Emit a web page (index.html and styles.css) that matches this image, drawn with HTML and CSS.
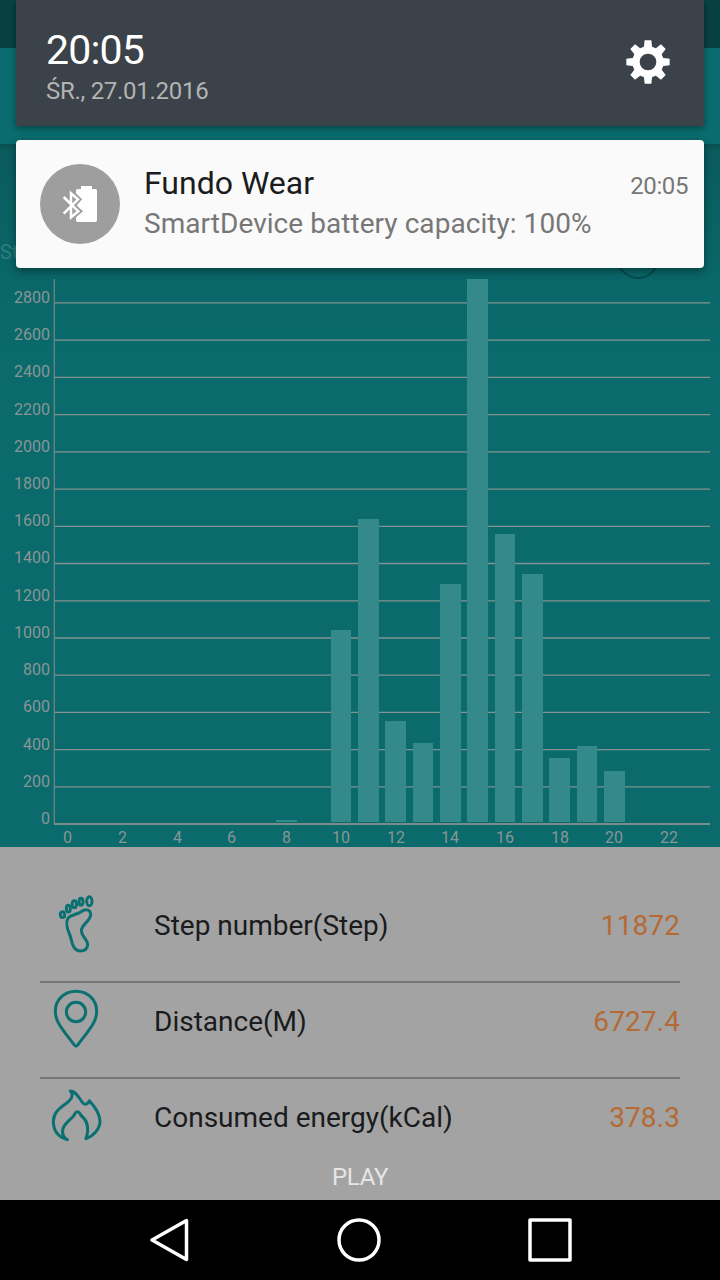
FILE: index.html
```
<!DOCTYPE html>
<html lang="pl">
<head>
<meta charset="utf-8">
<title>Fundo Wear</title>
<link rel="stylesheet" href="styles.css">
</head>
<body>
<div class="app">
<div class="status-bar"></div>
<div class="toolbar"></div>

<div class="chart-panel">
<span class="chart-title">Step</span>
<svg class="chart" width="720" height="703" viewBox="0 144 720 703">
    <circle class="ring" cx="638" cy="258" r="20"/>
    <path class="grid" d="M54 302.9H710M54 340.2H710M54 377.4H710M54 414.6H710M54 451.9H710M54 489.1H710M54 526.3H710M54 563.5H710M54 600.8H710M54 638H710M54 675.2H710M54 712.4H710M54 749.7H710M54 786.9H710"/>
    <path class="axis" d="M54.3 279V824"/>
    <path class="axis base" d="M54 824H710"/>
    <g class="bars">
        <rect x="276" y="820" width="21" height="2"/>
        <rect x="331" y="630" width="20" height="192"/>
        <rect x="358" y="519" width="21" height="303"/>
        <rect x="385" y="721" width="21" height="101"/>
        <rect x="413" y="743" width="20" height="79"/>
        <rect x="440" y="584" width="21" height="238"/>
        <rect x="467" y="279" width="21" height="543"/>
        <rect x="495" y="534" width="20" height="288"/>
        <rect x="522" y="574" width="21" height="248"/>
        <rect x="549" y="758" width="21" height="64"/>
        <rect x="577" y="746" width="20" height="76"/>
        <rect x="604" y="771" width="21" height="51"/>
    </g>
    <g class="y-labels">
        <text x="50" y="303">2800</text>
        <text x="50" y="340">2600</text>
        <text x="50" y="377">2400</text>
        <text x="50" y="415">2200</text>
        <text x="50" y="452">2000</text>
        <text x="50" y="489">1800</text>
        <text x="50" y="526">1600</text>
        <text x="50" y="563">1400</text>
        <text x="50" y="601">1200</text>
        <text x="50" y="638">1000</text>
        <text x="50" y="675">800</text>
        <text x="50" y="712">600</text>
        <text x="50" y="750">400</text>
        <text x="50" y="787">200</text>
        <text x="50" y="824">0</text>
    </g>
    <g class="x-labels">
        <text x="67.5" y="843">0</text>
        <text x="122.5" y="843">2</text>
        <text x="177.5" y="843">4</text>
        <text x="231.5" y="843">6</text>
        <text x="286.5" y="843">8</text>
        <text x="341" y="843">10</text>
        <text x="396" y="843">12</text>
        <text x="450" y="843">14</text>
        <text x="505" y="843">16</text>
        <text x="560" y="843">18</text>
        <text x="614" y="843">20</text>
        <text x="669" y="843">22</text>
    </g>
</svg>
</div>

<div class="stats">
<div class="stat">
    <svg class="stat-icon" viewBox="48 21 180 282">
        <path d="M114 115C120 105 142 103 152 96C164 87 180 86 182 102C185 121 154 133 154 152C155 172 173 176 173 194C172 208 161 213 150 213C137 212 131 203 127 191C123 178 122 168 116 156C110 142 109 124 114 115Z"/>
        <ellipse cx="97.500" cy="104" rx="6.500" ry="8.500" transform="rotate(-8 97.500 104)"/>
        <ellipse cx="115" cy="86" rx="6" ry="10" transform="rotate(-5 115 86)"/>
        <ellipse cx="133" cy="73" rx="6.500" ry="10.500"/>
        <ellipse cx="153" cy="65" rx="6" ry="10.500"/>
        <ellipse cx="178" cy="64" rx="8" ry="13.500"/>
    </svg>
    <span class="stat-name">Step number(Step)</span>
    <span class="stat-value">11872</span>
</div>
<div class="stat">
    <svg class="stat-icon" viewBox="48 24 180 282">
        <path d="M133 210C117 188 100 170 85 143C79 132 76 122 76 109C76 74 103 49 138 49C173 49 200 74 200 109C200 122 197 132 191 143C176 170 159 188 143 210Q138 217 133 210Z"/>
        <circle cx="138" cy="111" r="29"/>
    </svg>
    <span class="stat-name">Distance(M)</span>
    <span class="stat-value">6727.4</span>
</div>
<div class="stat">
    <svg class="stat-icon" viewBox="48 312 180 282">
        <path d="M121 348C136 347 145 365 156 381C165 394 175 386 178 377C191 391 210 414 210 439C210 461 192 482 168 491C179 458 171 437 155 423C148 417 150 410 142 410C134 410 136 418 128 426C113 441 90 457 100 481Q103 490 112 494C83 486 70 467 70 439C71 403 102 394 118 377C128 367 129 354 121 348Z"/>
    </svg>
    <span class="stat-name">Consumed energy(kCal)</span>
    <span class="stat-value">378.3</span>
</div>
<div class="play">PLAY</div>
</div>

<div class="nav-bar">
<svg width="720" height="80" viewBox="0 0 720 80">
    <path d="M152 40L186.500 20.500V59.500Z"/>
    <circle cx="359" cy="40" r="20"/>
    <rect x="530" y="20" width="40" height="40"/>
</svg>
</div>
</div>

<!-- notification shade, drawn over the app -->
<div class="shade">
<div class="shade-header">
    <div>
        <div class="clock">20:05</div>
        <div class="date">ŚR., 27.01.2016</div>
    </div>
    <svg class="gear" width="44" height="44" viewBox="-66 -66 132 132">
        <defs><path id="tooth" d="M-13 -40L-10 -65H10L13 -40Z"/></defs>
        <circle r="36" fill="none" stroke="#fff" stroke-width="22"/>
        <use href="#tooth"/>
        <use href="#tooth" transform="rotate(45)"/>
        <use href="#tooth" transform="rotate(90)"/>
        <use href="#tooth" transform="rotate(135)"/>
        <use href="#tooth" transform="rotate(180)"/>
        <use href="#tooth" transform="rotate(225)"/>
        <use href="#tooth" transform="rotate(270)"/>
        <use href="#tooth" transform="rotate(315)"/>
    </svg>
</div>
<div class="notification">
    <svg class="badge" width="80" height="80" viewBox="120 102 240 240">
        <circle cx="240" cy="222" r="120" fill="#9e9e9e"/>
        <path fill="#fff" d="M228 182Q228 177 233 177H243V168H276V177H286Q291 177 291 182V271Q291 276 286 276H233Q228 276 228 271V262L246 244L230 226L246 208L228 190Z"/>
        <path fill="none" stroke="#9e9e9e" stroke-width="17" d="M213 190L233 208L214 226L236 244L213 263"/>
        <path fill="none" stroke="#fff" stroke-width="7.500" d="M191 201L235 244L213 262V190L234 208L191 251"/>
    </svg>
    <div class="message">
        <div class="message-title">Fundo Wear</div>
        <div class="message-text">SmartDevice battery capacity: 100%</div>
    </div>
    <div class="message-time">20:05</div>
</div>
</div>
</body>
</html>
```
FILE: styles.css
```
* { box-sizing: border-box; }
body { margin: 0; width: 720px; height: 1280px; overflow: hidden; background: #000; font-family: Roboto, sans-serif; }
svg { display: block; flex-shrink: 0; }

.app { display: flex; flex-direction: column; height: 1280px; }
.status-bar { height: 48px; background: #084041; }
.toolbar { height: 96px; background: #0a6c6e; }

.chart-panel { position: relative; height: 703px; background: linear-gradient(#084f51 0, #0a5b5d 6px, #0a6163 70px, #0a686a 150px, #0a6a6c 220px); }
.chart-title { position: absolute; left: 0; top: 96px; font-size: 20px; line-height: 24px; color: #2d7f81; }
.ring { fill: none; stroke: #07494b; stroke-width: 2; }
.grid { stroke: #849392; stroke-width: 1.3; }
.axis { stroke: #6d8685; stroke-width: 1.3; }
.base { stroke: #7b8c8b; stroke-width: 2; }
.bars { fill: #34898b; }
.y-labels, .x-labels { font-size: 16px; fill: #899695; }
.y-labels { text-anchor: end; }
.x-labels { text-anchor: middle; }

.stats { height: 353px; padding: 40px 40px 0; background: #a3a3a3; }
.stat { display: flex; align-items: center; height: 96px; border-bottom: 2px solid #777; font-size: 28px; line-height: 32px; color: #1a1b1c; }
.stat:nth-child(3) { border-color: transparent; }
.stat-icon { width: 60px; height: 94px; margin: 0 48px 0 6px; fill: none; stroke: #0a7072; stroke-width: 9; stroke-linejoin: round; }
.stat-name, .stat-value { padding-bottom: 16px; }
.stat-value { margin-left: auto; letter-spacing: .1px; color: #b56a34; }
.play { margin-top: -12px; font-size: 24px; line-height: 28px; letter-spacing: -.3px; text-align: center; color: #e6e6e6; }

.nav-bar { height: 80px; background: #000; }
.nav-bar svg { fill: none; stroke: #fff; stroke-width: 3.5; stroke-linejoin: round; }

.shade { position: absolute; left: 16px; top: 0; width: 688px; }
.shade-header { display: flex; justify-content: space-between; height: 126px; padding: 25px 34px 0 30px; background: #3b4249; box-shadow: 0 2px 6px rgba(0, 0, 0, .4); }
.clock { padding-top: 1px; font-size: 41px; line-height: 48px; letter-spacing: -.8px; color: #fff; }
.date { margin-top: 3px; font-size: 24px; line-height: 28px; letter-spacing: -.28px; color: #b2b4b4; }
.gear { margin-top: 15px; fill: #fff; }
.notification { display: flex; height: 128px; margin-top: 14px; padding: 24px 16px 0 24px; background: #fafafa; border-radius: 4px; box-shadow: 0 3px 8px rgba(0, 0, 0, .4); }
.message { margin-left: 24px; }
.message-title { font-size: 32px; line-height: 38px; color: #1b1c1d; }
.message-text { margin-top: 5px; font-size: 28px; line-height: 34px; letter-spacing: .05px; color: #777; }
.message-time { margin: 8px 0 0 auto; font-size: 24px; line-height: 28px; letter-spacing: -.4px; color: #777; }
```
